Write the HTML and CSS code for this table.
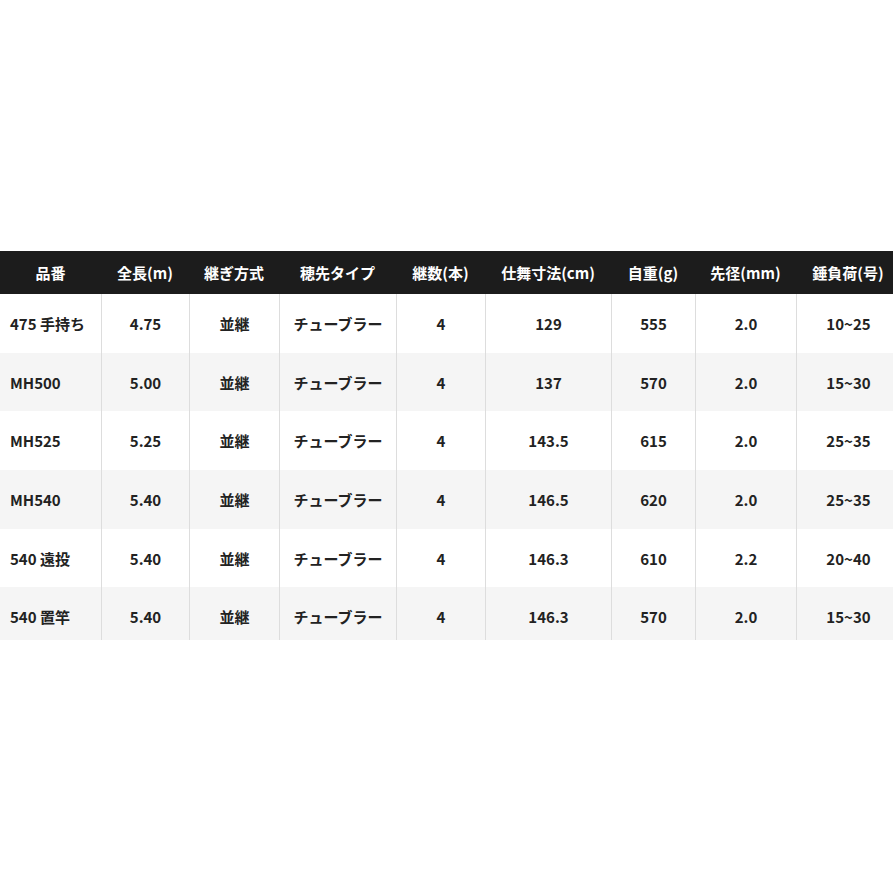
FILE: index.html
```html
<!DOCTYPE html>
<html lang="ja">
<head>
<meta charset="utf-8">
<title>スペック表</title>
<link rel="stylesheet" href="styles.css">
</head>
<body>
<div class="wrap">
<table class="spec">
<colgroup>
<col class="c1"><col class="c2"><col class="c3"><col class="c4"><col class="c5"><col class="c6"><col class="c7"><col class="c8"><col class="c9">
</colgroup>
<thead>
<tr><th>品番</th><th>全長(m)</th><th>継ぎ方式</th><th>穂先タイプ</th><th>継数(本)</th><th>仕舞寸法(cm)</th><th>自重(g)</th><th>先径(mm)</th><th>錘負荷(号)</th></tr>
</thead>
<tbody>
<tr><td>475 手持ち</td><td>4.75</td><td>並継</td><td>チューブラー</td><td>4</td><td>129</td><td>555</td><td>2.0</td><td>10~25</td></tr>
<tr><td>MH500</td><td>5.00</td><td>並継</td><td>チューブラー</td><td>4</td><td>137</td><td>570</td><td>2.0</td><td>15~30</td></tr>
<tr><td>MH525</td><td>5.25</td><td>並継</td><td>チューブラー</td><td>4</td><td>143.5</td><td>615</td><td>2.0</td><td>25~35</td></tr>
<tr><td>MH540</td><td>5.40</td><td>並継</td><td>チューブラー</td><td>4</td><td>146.5</td><td>620</td><td>2.0</td><td>25~35</td></tr>
<tr><td>540 遠投</td><td>5.40</td><td>並継</td><td>チューブラー</td><td>4</td><td>146.3</td><td>610</td><td>2.2</td><td>20~40</td></tr>
<tr><td>540 置竿</td><td>5.40</td><td>並継</td><td>チューブラー</td><td>4</td><td>146.3</td><td>570</td><td>2.0</td><td>15~30</td></tr>
</tbody>
</table>
</div>
</body>
</html>
```
FILE: styles.css
```css
html, body {
  margin: 0;
  padding: 0;
  background: #ffffff;
  overflow: hidden;
}
body {
  font-family: "Noto Sans CJK JP", "Noto Sans", sans-serif;
  color: #222222;
}
.wrap {
  padding-top: 251px;
  width: 893px;
  overflow: hidden;
}
.spec {
  table-layout: fixed;
  width: 900px;
  border-collapse: separate;
  border-spacing: 0;
  font-size: 15px;
  font-weight: 700;
}
.c1 { width: 101px; }
.c2 { width: 88px; }
.c3 { width: 90px; }
.c4 { width: 117px; }
.c5 { width: 89px; }
.c6 { width: 126px; }
.c7 { width: 84px; }
.c8 { width: 101px; }
.c9 { width: 104px; }
.spec th {
  background: #1c1c1c;
  color: #ffffff;
  height: 43px;
  padding: 0;
  text-align: center;
  vertical-align: middle;
  white-space: nowrap;
  font-weight: 700;
}
.spec td {
  box-sizing: border-box;
  height: 58.7px;
  padding: 0;
  text-align: center;
  vertical-align: middle;
  white-space: nowrap;
  border-left: 1px solid #dddddd;
}
.spec td:first-child {
  border-left: none;
  text-align: left;
  padding-left: 10px;
}
.spec tbody tr:nth-child(even) td {
  background: #f5f5f5;
}
.spec tbody tr:last-child td {
  height: 53px;
  padding-top: 5px;
}
```
